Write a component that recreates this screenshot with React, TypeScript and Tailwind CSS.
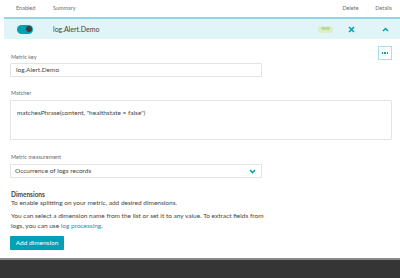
import React from "react";

const font = { fontFamily: "Lato, 'Noto Sans', sans-serif" };

function Toggle() {
  return (
    <div className="w-[16px] h-[9px] rounded-full bg-[#00a1b2] flex items-center justify-end pr-[1.5px]">
      <div className="w-[6px] h-[6px] rounded-full bg-[#3f3f3f]" />
    </div>
  );
}

function ChevronDown() {
  return (
    <svg width="7" height="5" viewBox="0 0 7 5" fill="none">
      <path d="M1 1 L3.5 3.5 L6 1" stroke="#00a1b2" strokeWidth="1.6" />
    </svg>
  );
}

export default function App() {
  return (
    <div className="w-[400px] h-[278px] bg-white flex flex-col text-[#454646]" style={font}>
      {/* table header */}
      <div className="h-[17px] flex items-center text-[5.5px] text-[#6d6d6d]">
        <div className="w-[53px] pl-[16px]">Enabled</div>
        <div className="flex-1">Summary</div>
        <div className="w-[33px] text-center">Delete</div>
        <div className="w-[33px] text-center">Details</div>
      </div>

      {/* selected row */}
      <div className="ml-[4px] border-t-2 border-[#8fd8e2] bg-[#e1f5f8] h-[22px] flex items-center">
        <div className="w-[49px] pl-[13px]">
          <Toggle />
        </div>
        <div className="flex-1 text-[7px] text-[#3f3f3f]">log.Alert.Demo</div>
        <div className="w-[15px] h-[7px] rounded-full bg-[#d9f0c4] text-[3.5px] leading-[7px] text-[#8cb86a] text-center mr-[12px]">
          NEW
        </div>
        <div className="w-[12px] flex justify-center mr-[22px]">
          <svg width="7" height="7" viewBox="0 0 7 7">
            <path d="M1 1 L6 6 M6 1 L1 6" stroke="#00a1b2" strokeWidth="1.5" />
          </svg>
        </div>
        <div className="w-[12px] flex justify-center mr-[9px]">
          <svg width="7" height="5" viewBox="0 0 7 5" fill="none">
            <path d="M1 4 L3.5 1.5 L6 4" stroke="#00a1b2" strokeWidth="1.5" />
          </svg>
        </div>
      </div>

      {/* details */}
      <div className="flex flex-col px-[10px]">
        <div className="h-[7px]" />
        <div className="flex justify-end">
          <div className="w-[14px] h-[14px] border border-[#a9e0e7] flex items-center justify-center gap-[1px] mr-[-2px]">
            <div className="w-[1.5px] h-[1.5px] bg-[#00a1b2]" />
            <div className="w-[1.5px] h-[1.5px] bg-[#00a1b2]" />
            <div className="w-[1.5px] h-[1.5px] bg-[#00a1b2]" />
          </div>
        </div>

        <div className="text-[5.5px] text-[#6d6d6d] pl-[1px] mt-[-7px] leading-[8px]">Metric key</div>
        <div className="mt-[2px] w-[252px] h-[14px] border border-[#e3e3e3] rounded-[1px] flex items-center px-[5px] text-[6.5px]">
          log.Alert.Demo
        </div>

        <div className="text-[5.5px] text-[#6d6d6d] pl-[1px] mt-[12px] leading-[8px]">Matcher</div>
        <div className="mt-[3px] w-[382px] h-[40px] border border-[#e3e3e3] rounded-[1px] px-[6px] pt-[7px] text-[6.5px] leading-[9px]">
          matchesPhrase(content, "healthstate = false")
        </div>

        <div className="text-[5.5px] text-[#6d6d6d] pl-[1px] mt-[13px] leading-[8px]">Metric measurement</div>
        <div className="mt-[3px] w-[252px] h-[14px] border border-[#e3e3e3] rounded-[1px] flex items-center justify-between pl-[4px] pr-[5px] text-[6.5px]">
          <span>Occurrence of logs records</span>
          <ChevronDown />
        </div>

        <div className="mt-[13px] text-[6.5px] font-bold pl-[1px] leading-[8px]">Dimensions</div>
        <div className="text-[6.5px] pl-[1px] leading-[10px] mt-[-1px]">
          To enable splitting on your metric, add desired dimensions.
        </div>
        <p className="text-[6.5px] pl-[1px] leading-[10px] mt-[3px] w-[256px]">
          You can select a dimension name from the list or set it to any value. To extract fields from logs, you can
          use <span className="text-[#00a1b2]">log processing</span>.
        </p>
        <div className="mt-[5px]">
          <div className="w-[54px] h-[14px] bg-[#00a1b2] rounded-[1px] text-white text-[6.5px] flex items-center justify-center">
            Add dimension
          </div>
        </div>
      </div>

      <div className="flex-1" />
      <div className="h-[20px] border-t-2 border-[#8a8a8a] bg-[#353535]" />
    </div>
  );
}
